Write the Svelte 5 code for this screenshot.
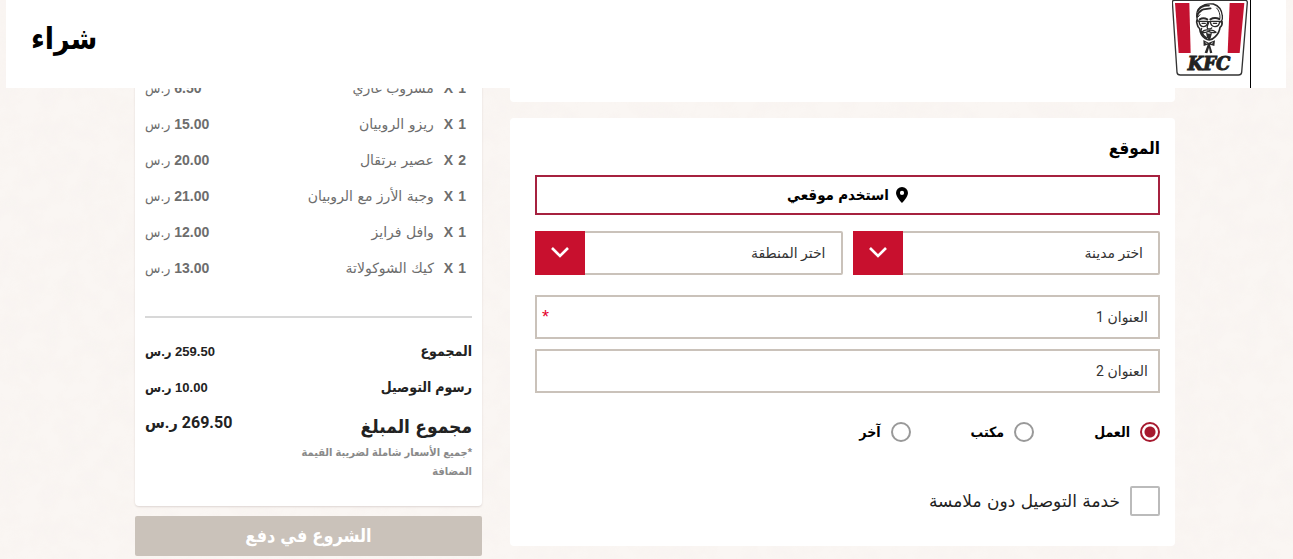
<script>
  const items = [
    { qty: 1, name: "مشروب غازي", price: "6.50" },
    { qty: 1, name: "ريزو الروبيان", price: "15.00" },
    { qty: 2, name: "عصير برتقال", price: "20.00" },
    { qty: 1, name: "وجبة الأرز مع الروبيان", price: "21.00" },
    { qty: 1, name: "وافل فرايز", price: "12.00" },
    { qty: 1, name: "كيك الشوكولاتة", price: "13.00" },
  ];

  const totals = [
    { label: "المجموع", price: "259.50" },
    { label: "رسوم التوصيل", price: "10.00" },
  ];

  const places = [
    { id: "work", label: "العمل" },
    { id: "office", label: "مكتب" },
    { id: "other", label: "آخر" },
  ];

  const selects = [
    { id: "city", label: "اختر مدينة" },
    { id: "area", label: "اختر المنطقة" },
  ];

  let place = $state("work");
  let contactless = $state(false);
</script>

<div class="page" dir="rtl" lang="ar">
  <header>
    <a class="logo" href="/" aria-label="KFC">
      <svg viewBox="36 0 228 228" width="76" height="76">
        <path d="M37 5Q38 1 44 1H256Q262 1 262 7L245 217Q244 225 235 225H61Q52 225 51 217Z" fill="#fff" stroke="#333" stroke-width="4" />
        <path d="M45 9H88L92 159H56Z" fill="#c41230" />
        <path d="M209 9H253L239 159H203Z" fill="#c41230" />
        <g fill="none" stroke="#2b2a2a" stroke-linecap="round" stroke-linejoin="round">
          <path d="M112 62Q105 34 121 21Q137 9 160 12Q185 20 187 48Q189 58 183 67" stroke-width="4" />
          <path d="M112 50Q114 33 130 28L152 25M113 33Q124 15 147 17M112 42L126 30" stroke-width="5" />
          <path d="M113 52L120 44M170 24Q181 35 180 54" stroke-width="3" />
          <path d="M111 60Q108 66 112 74Q113 82 119 86Q121 106 136 116Q151 126 166 110Q178 98 180 82Q188 76 186 65" stroke-width="5" />
          <path d="M119 58Q130 52 142 58M151 58Q164 51 178 57" stroke-width="6" />
          <path d="M117 64H143Q143 79 131 80Q119 80 117 64ZM151 64H179Q178 79 165 80Q152 80 151 64ZM143 65H151M111 63H117M179 64H185" stroke-width="4" />
          <path d="M126 70H136M160 70H170" stroke-width="4" />
          <path d="M146 68Q139 82 143 86Q149 89 155 84M125 85Q121 91 125 97" stroke-width="4" />
          <path d="M144 90Q132 88 124 98Q136 99 146 94Q155 100 168 97Q158 88 148 91" stroke-width="4" />
          <path d="M126 99Q130 109 139 114" stroke-width="6" />
        </g>
        <path d="M138 98L147 101L156 99L152 115L147 119L141 113Z" fill="#2b2a2a" />
        <path d="M130 120L146 128L165 121L163 138L150 134L157 158L150 160L147 143L142 160L134 158L143 134L131 138Z" fill="#2b2a2a" />
        <path d="M136 128L142 131M153 131L159 128" stroke="#fff" stroke-width="2" />
        <text x="147" y="209" text-anchor="middle">KFC</text>
      </svg>
    </a>
    <h1>شراء</h1>
  </header>

  <main>
    <div class="forms">
      <section class="card previous"></section>

      <section class="card location">
        <h2>الموقع</h2>
        <button class="locate" type="button">
          <svg viewBox="0 0 12 16" width="12" height="16">
            <path fill-rule="evenodd" d="M6 0A6 6 0 0 0 0 6C0 10 6 16 6 16S12 10 12 6A6 6 0 0 0 6 0ZM6 3.8A2.1 2.1 0 1 1 6 8A2.1 2.1 0 0 1 6 3.8Z" />
          </svg>
          <span>استخدم موقعي</span>
        </button>

        <div class="selects">
          {#each selects as s}
            <div class="select">
              <select id={s.id} aria-label={s.label}>
                <option>{s.label}</option>
              </select>
              <span class="arrow">
                <svg viewBox="0 0 18 12" width="18" height="12">
                  <path d="M1 1L9 9L17 1" fill="none" stroke="#fff" stroke-width="2.6" />
                </svg>
              </span>
            </div>
          {/each}
        </div>

        <div class="field">
          <input type="text" aria-label="العنوان 1" placeholder="العنوان 1" required />
          <span class="star">*</span>
        </div>
        <div class="field">
          <input type="text" aria-label="العنوان 2" placeholder="العنوان 2" />
        </div>

        <div class="places">
          {#each places as p}
            <label>
              <input type="radio" name="place" value={p.id} bind:group={place} />
              {p.label}
            </label>
          {/each}
        </div>

        <label class="contactless">
          <input type="checkbox" bind:checked={contactless} />
          خدمة التوصيل دون ملامسة
        </label>
      </section>
    </div>

    <aside>
      <section class="card summary">
        <ul>
          {#each items as item}
            <li>
              <span class="qty"><b>{item.qty}</b><b>X</b></span>
              <span class="name">{item.name}</span>
              <span class="price"><b>{item.price}</b> ر.س</span>
            </li>
          {/each}
        </ul>
        <hr />
        {#each totals as t}
          <div class="row">
            <span>{t.label}</span>
            <span class="price">{t.price} ر.س</span>
          </div>
        {/each}
        <div class="row total">
          <span>مجموع المبلغ</span>
          <span class="price">269.50 ر.س</span>
        </div>
        <p>*جميع الأسعار شاملة لضريبة القيمة المضافة</p>
      </section>
      <button class="pay" type="button">الشروع في دفع</button>
    </aside>
  </main>
</div>

<style>
  /* paper texture behind the cards */
  :global(body) {
    background: #faf6f3
      url("data:image/svg+xml,%3Csvg xmlns='http://www.w3.org/2000/svg' width='400' height='400'%3E%3Cfilter id='n'%3E%3CfeTurbulence type='fractalNoise' baseFrequency='.05' numOctaves='3' stitchTiles='stitch'/%3E%3CfeColorMatrix values='0 0 0 0 .8 0 0 0 0 .7 0 0 0 0 .65 .15 0 0 0 -.05'/%3E%3C/filter%3E%3Crect width='400' height='400' filter='url(%23n)'/%3E%3C/svg%3E");
    overflow: hidden;
  }
  .page,
  button,
  input,
  select {
    font-family: "Liberation Sans", "DejaVu Sans Condensed", "DejaVu Sans", sans-serif;
    box-sizing: border-box;
  }
  header {
    position: fixed;
    top: 0;
    left: 6px;
    right: 7px;
    z-index: 2;
    height: 88px;
    padding: 0 35px 0 25px;
    box-sizing: border-box;
    display: flex;
    justify-content: space-between;
    align-items: flex-start;
    background: #fff;
  }
  .logo {
    height: 88px;
    padding-right: 2px;
    border-right: 1px solid #000;
  }
  .logo svg {
    display: block;
  }
  .logo text {
    font: italic bold 54px "DejaVu Serif", serif;
    fill: #222;
    stroke: #222;
    stroke-width: 3px;
    direction: ltr;
  }
  h1 {
    margin: 0;
    font-size: 30px;
    line-height: 78px;
    font-weight: bold;
  }
  main {
    display: grid;
    grid-template-columns: 665fr 347fr;
    gap: 28px;
    align-items: start;
    padding: 60px 118px 0 135px;
  }
  .card {
    background: #fff;
    border-radius: 4px;
  }
  .previous {
    height: 42px;
    margin-bottom: 16px;
  }
  .location {
    padding: 16px 15px 30px 25px;
  }
  h2 {
    margin: 0 0 11px;
    font-size: 17px;
    line-height: 30px;
  }
  .locate {
    width: 100%;
    height: 40px;
    display: flex;
    justify-content: center;
    align-items: center;
    gap: 7px;
    background: #fff;
    border: 2px solid #a6213f;
    color: #000;
    font-size: 15px;
    font-weight: bold;
  }
  .selects {
    display: grid;
    grid-template-columns: 1fr 1fr;
    gap: 10px;
    margin: 16px 0 20px;
  }
  .select,
  .field {
    display: grid;
    align-items: center;
  }
  .select > *,
  .field > * {
    grid-area: 1 / 1;
  }
  select,
  .field input {
    width: 100%;
    height: 44px;
    padding: 0 15px;
    background: #fff;
    border: 2px solid #cac2ba;
    border-radius: 2px;
    color: #333;
    font-family: "Roboto", "DejaVu Sans", sans-serif;
    font-size: 14px;
    appearance: none;
  }
  .arrow {
    justify-self: end;
    width: 50px;
    height: 44px;
    display: flex;
    justify-content: center;
    align-items: center;
    background: #c8102e;
    pointer-events: none;
  }
  .field {
    margin-bottom: 10px;
  }
  .field input {
    padding: 0 10px;
    border-radius: 0;
  }
  .field input::placeholder {
    color: #333;
    opacity: 1;
  }
  .star {
    justify-self: end;
    padding-left: 7px;
    color: #e4002b;
    font-size: 18px;
  }
  .places {
    display: flex;
    gap: 60px;
    margin: 29px 0 44px;
  }
  label {
    display: flex;
    align-items: center;
    gap: 10px;
    font-size: 14px;
    font-weight: bold;
    line-height: 20px;
  }
  input[type="radio"] {
    appearance: none;
    width: 20px;
    height: 20px;
    margin: 0;
    border: 2px solid #999;
    border-radius: 50%;
  }
  input[type="radio"]:checked {
    border-color: #a6192e;
    background: radial-gradient(circle, #a6192e 5px, #fff 6px);
  }
  .contactless {
    color: #222;
    font-family: "DejaVu Sans", sans-serif;
    font-size: 17px;
    font-weight: normal;
  }
  input[type="checkbox"] {
    appearance: none;
    width: 30px;
    height: 30px;
    margin: 0;
    border: 2px solid #bbb;
    border-radius: 2px;
  }
  input[type="checkbox"]:checked {
    background: #a6192e;
  }
  .summary {
    padding: 10px 10px 25px;
    box-shadow: 0 1px 2px #ddd6d2;
    color: #222;
  }
  ul {
    margin: 0;
    padding: 0;
    list-style: none;
  }
  li {
    display: flex;
    align-items: center;
    height: 36px;
    color: #6d6d6d;
    font-size: 14px;
  }
  .qty {
    display: flex;
    gap: 5px;
    padding: 0 6px 0 10px;
  }
  .name {
    flex: 1;
    font-family: "DejaVu Sans", sans-serif;
  }
  hr {
    height: 2px;
    margin: 30px 0 15px;
    border: 0;
    background: #d8d8d8;
  }
  .row {
    display: flex;
    justify-content: space-between;
    align-items: center;
    height: 36px;
    font-size: 14px;
    font-weight: bold;
  }
  .row .price {
    font-size: 13px;
  }
  .total {
    align-items: flex-start;
    height: 38px;
    font-size: 19px;
    line-height: 44px;
  }
  .total .price {
    font-family: "Roboto", "DejaVu Sans Condensed", sans-serif;
    font-size: 16px;
    line-height: 36px;
  }
  p {
    width: 180px;
    margin: 0;
    color: #8a8a8a;
    font-size: 11px;
    font-weight: bold;
    line-height: 19px;
  }
  .pay {
    width: 100%;
    height: 40px;
    margin-top: 10px;
    border: 0;
    border-radius: 2px;
    background: #cac2ba;
    color: #fff;
    font-size: 18px;
    font-weight: bold;
  }
</style>
